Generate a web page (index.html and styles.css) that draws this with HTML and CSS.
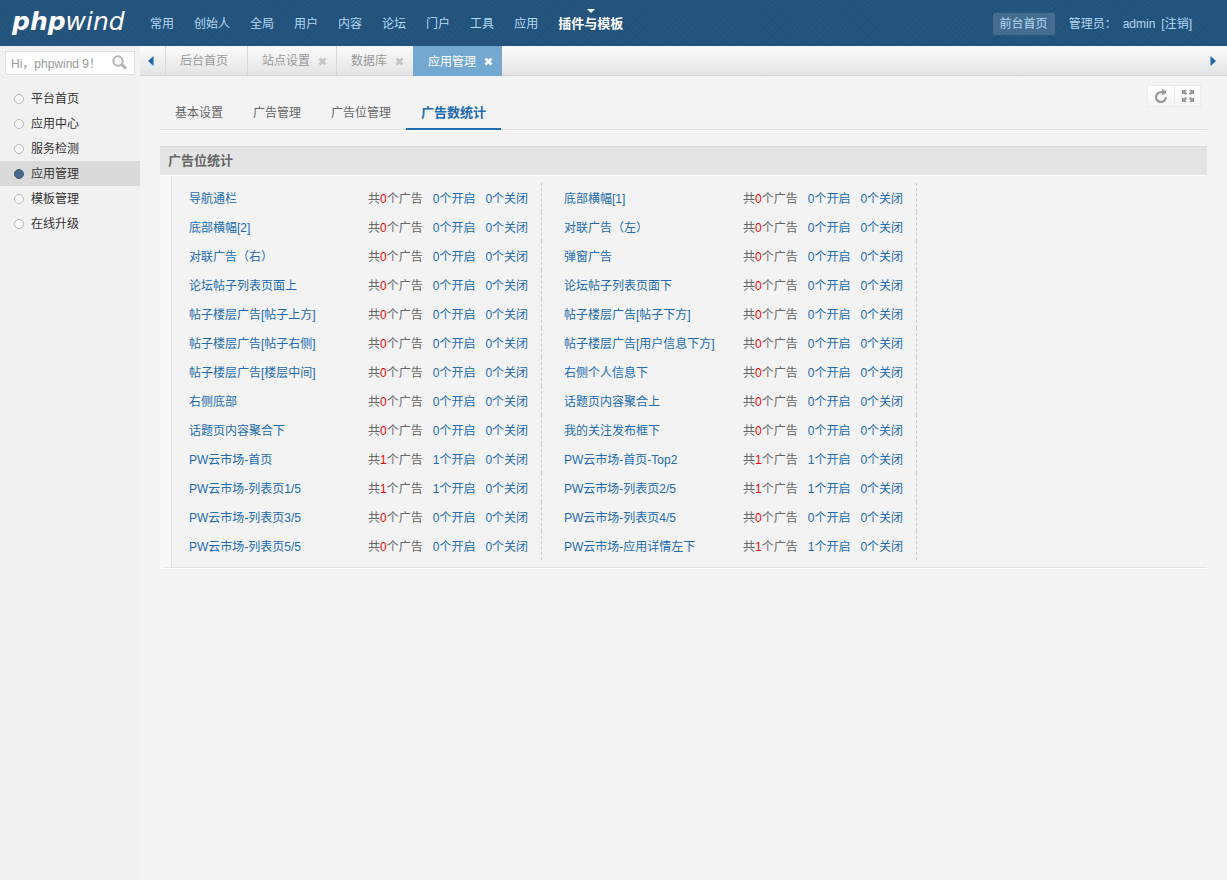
FILE: index.html
```html
<!DOCTYPE html>
<html lang="zh-CN">
<head>
<meta charset="utf-8">
<title>phpwind</title>
<link rel="stylesheet" href="styles.css">
</head>
<body>
<header class="header">
  <h1 class="logo"><strong>php</strong>wind</h1>
  <nav class="nav">
    <a href="#">常用</a><a href="#">创始人</a><a href="#">全局</a><a href="#">用户</a><a href="#">内容</a><a href="#">论坛</a><a href="#">门户</a><a href="#">工具</a><a href="#">应用</a><a href="#" class="current">插件与模板</a>
  </nav>
  <div class="user">
    <a href="#" class="home">前台首页</a>
    <span>管理员：</span>
    <span>admin</span>
    <a href="#">[注销]</a>
  </div>
</header>
<div class="body">
  <aside class="side">
    <form class="search">
      <input type="text" aria-label="搜索" placeholder="Hi，phpwind 9！">
      <button type="button" aria-label="搜索"><svg width="16" height="16" viewBox="0 0 16 16"><circle cx="6" cy="6" r="4.7" fill="none" stroke="#b4b4b4" stroke-width="2"/><path d="M9.5 9.500 14 13.700" stroke="#b4b4b4" stroke-width="3"/></svg></button>
    </form>
    <ul class="menu">
      <li><a href="#">平台首页</a></li>
      <li><a href="#">应用中心</a></li>
      <li><a href="#">服务检测</a></li>
      <li class="current"><a href="#">应用管理</a></li>
      <li><a href="#">模板管理</a></li>
      <li><a href="#">在线升级</a></li>
    </ul>
  </aside>
  <main class="main">
    <div class="tabs">
      <button type="button" class="arrow" aria-label="向左"><svg width="6" height="10" viewBox="0 0 6 10"><path d="M5.500 0v10L0 5z" fill="#1f66ae"/></svg></button>
      <div class="tab first"><a href="#">后台首页</a></div>
      <div class="tab"><a href="#">站点设置</a><button type="button" aria-label="关闭"><svg width="9" height="9" viewBox="0 0 9 9"><path d="M1.500 1.500l6 6M7.500 1.500l-6 6"/></svg></button></div>
      <div class="tab"><a href="#">数据库</a><button type="button" aria-label="关闭"><svg width="9" height="9" viewBox="0 0 9 9"><path d="M1.500 1.500l6 6M7.500 1.500l-6 6"/></svg></button></div>
      <div class="tab current"><a href="#">应用管理</a><button type="button" aria-label="关闭"><svg width="9" height="9" viewBox="0 0 9 9"><path d="M1.500 1.500l6 6M7.500 1.500l-6 6"/></svg></button></div>
      <button type="button" class="arrow next" aria-label="向右"><svg width="6" height="10" viewBox="0 0 6 10"><path d="M.5 0v10L6 5z" fill="#1f66ae"/></svg></button>
    </div>
    <div class="tools">
      <button type="button" aria-label="刷新"><svg width="14" height="14" viewBox="0 0 14 14"><path d="M9 3.200H7A4.900 4.900 0 1 0 11.900 8" fill="none" stroke="#999" stroke-width="2.200"/><path d="M8 0l1.500 0 0 1.500 2.500 0 0 2.700-4 2z" fill="#999"/></svg></button>
      <button type="button" aria-label="全屏"><svg width="12" height="12" viewBox="0 0 12 12" fill="#999"><path d="M0 0h5L3.500 1.500 5 3.500 3.500 5 1.500 3.500 0 5zM12 0v5l-1.500-1.500L8.500 5 7 3.500l1.500-2L7 0zM0 12V7l1.500 1.500L3.500 7 5 8.500l-1.500 2L5 12zM12 12H7l1.500-1.500L7 8.500 8.500 7l2 1.500L12 7z"/></svg></button>
    </div>
    <div class="content">
      <nav class="subnav">
        <a href="#">基本设置</a><a href="#">广告管理</a><a href="#">广告位管理</a><a href="#" class="current">广告数统计</a>
      </nav>
      <h2 class="title">广告位统计</h2>
      <div class="panel">
        <ul class="stats">
          <li><a href="#" class="name">导航通栏</a><span>共<em>0</em>个广告</span><a href="#">0个开启</a><a href="#">0个关闭</a></li>
          <li><a href="#" class="name">底部横幅[1]</a><span>共<em>0</em>个广告</span><a href="#">0个开启</a><a href="#">0个关闭</a></li>
          <li><a href="#" class="name">底部横幅[2]</a><span>共<em>0</em>个广告</span><a href="#">0个开启</a><a href="#">0个关闭</a></li>
          <li><a href="#" class="name">对联广告（左）</a><span>共<em>0</em>个广告</span><a href="#">0个开启</a><a href="#">0个关闭</a></li>
          <li><a href="#" class="name">对联广告（右）</a><span>共<em>0</em>个广告</span><a href="#">0个开启</a><a href="#">0个关闭</a></li>
          <li><a href="#" class="name">弹窗广告</a><span>共<em>0</em>个广告</span><a href="#">0个开启</a><a href="#">0个关闭</a></li>
          <li><a href="#" class="name">论坛帖子列表页面上</a><span>共<em>0</em>个广告</span><a href="#">0个开启</a><a href="#">0个关闭</a></li>
          <li><a href="#" class="name">论坛帖子列表页面下</a><span>共<em>0</em>个广告</span><a href="#">0个开启</a><a href="#">0个关闭</a></li>
          <li><a href="#" class="name">帖子楼层广告[帖子上方]</a><span>共<em>0</em>个广告</span><a href="#">0个开启</a><a href="#">0个关闭</a></li>
          <li><a href="#" class="name">帖子楼层广告[帖子下方]</a><span>共<em>0</em>个广告</span><a href="#">0个开启</a><a href="#">0个关闭</a></li>
          <li><a href="#" class="name">帖子楼层广告[帖子右侧]</a><span>共<em>0</em>个广告</span><a href="#">0个开启</a><a href="#">0个关闭</a></li>
          <li><a href="#" class="name">帖子楼层广告[用户信息下方]</a><span>共<em>0</em>个广告</span><a href="#">0个开启</a><a href="#">0个关闭</a></li>
          <li><a href="#" class="name">帖子楼层广告[楼层中间]</a><span>共<em>0</em>个广告</span><a href="#">0个开启</a><a href="#">0个关闭</a></li>
          <li><a href="#" class="name">右侧个人信息下</a><span>共<em>0</em>个广告</span><a href="#">0个开启</a><a href="#">0个关闭</a></li>
          <li><a href="#" class="name">右侧底部</a><span>共<em>0</em>个广告</span><a href="#">0个开启</a><a href="#">0个关闭</a></li>
          <li><a href="#" class="name">话题页内容聚合上</a><span>共<em>0</em>个广告</span><a href="#">0个开启</a><a href="#">0个关闭</a></li>
          <li><a href="#" class="name">话题页内容聚合下</a><span>共<em>0</em>个广告</span><a href="#">0个开启</a><a href="#">0个关闭</a></li>
          <li><a href="#" class="name">我的关注发布框下</a><span>共<em>0</em>个广告</span><a href="#">0个开启</a><a href="#">0个关闭</a></li>
          <li><a href="#" class="name">PW云市场-首页</a><span>共<em>1</em>个广告</span><a href="#">1个开启</a><a href="#">0个关闭</a></li>
          <li><a href="#" class="name">PW云市场-首页-Top2</a><span>共<em>1</em>个广告</span><a href="#">1个开启</a><a href="#">0个关闭</a></li>
          <li><a href="#" class="name">PW云市场-列表页1/5</a><span>共<em>1</em>个广告</span><a href="#">1个开启</a><a href="#">0个关闭</a></li>
          <li><a href="#" class="name">PW云市场-列表页2/5</a><span>共<em>1</em>个广告</span><a href="#">1个开启</a><a href="#">0个关闭</a></li>
          <li><a href="#" class="name">PW云市场-列表页3/5</a><span>共<em>0</em>个广告</span><a href="#">0个开启</a><a href="#">0个关闭</a></li>
          <li><a href="#" class="name">PW云市场-列表页4/5</a><span>共<em>0</em>个广告</span><a href="#">0个开启</a><a href="#">0个关闭</a></li>
          <li><a href="#" class="name">PW云市场-列表页5/5</a><span>共<em>0</em>个广告</span><a href="#">0个开启</a><a href="#">0个关闭</a></li>
          <li><a href="#" class="name">PW云市场-应用详情左下</a><span>共<em>1</em>个广告</span><a href="#">1个开启</a><a href="#">0个关闭</a></li>
        </ul>
      </div>
    </div>
  </main>
</div>
</body>
</html>
```
FILE: styles.css
```css
* { box-sizing: border-box; }
body {
  margin: 0;
  min-height: 100vh;
  display: flex;
  flex-direction: column;
  background: #f3f3f3;
  color: #666;
  font: 12px/18px "Liberation Sans", "Noto Sans CJK SC", sans-serif;
}
a { color: inherit; text-decoration: none; }
ul { margin: 0; padding: 0; list-style: none; }
button { padding: 0; border: 0; background: none; font: inherit; cursor: pointer; }
svg { display: block; }

.header {
  height: 46px;
  display: flex;
  align-items: center;
  padding: 1px 35px 0 12px;
  color: #b4d8f4;
  background:
    repeating-linear-gradient(45deg, rgba(0, 0, 30, .04) 0 1px, transparent 1px 4px),
    repeating-linear-gradient(-45deg, rgba(0, 0, 30, .04) 0 1px, transparent 1px 4px),
    #24557f;
}
.logo {
  margin: 0;
  width: 128px;
  padding-bottom: 3px;
  color: #fff;
  font: italic 400 25px/40px "DejaVu Sans", sans-serif;
}
.logo strong { font-weight: 700; }
.nav { display: flex; flex: 1; }
.nav a { position: relative; padding: 0 10px; line-height: 46px; white-space: nowrap; }
.nav .current { color: #fff; font-size: 13px; font-weight: 700; }
.nav .current::before {
  content: "";
  position: absolute;
  top: 8px;
  left: 50%;
  margin-left: -4px;
  border: 4px solid transparent;
  border-top-color: #fff;
  border-bottom: 0;
}
.user { display: flex; align-items: center; gap: 6px; white-space: nowrap; }
.home { margin-right: 8px; padding: 2px 7px; border-radius: 2px; background: #456d92; }

.body { flex: 1; display: flex; }
.side { width: 140px; background: #f1f1f1; }
.search {
  height: 24px;
  margin: 5px 5px 11px;
  display: flex;
  align-items: center;
  border: 1px solid #e0e0e0;
  background: #fff;
}
.search input {
  flex: 1;
  min-width: 0;
  height: 22px;
  padding: 2px 0 0 5px;
  border: 0;
  background: none;
  font: inherit;
}
.search input::placeholder { color: #999; }
.search button { margin-right: 6px; }
.menu a { display: flex; align-items: center; height: 25px; padding-left: 14px; color: #333; }
.menu a::before {
  content: "";
  width: 8px;
  height: 8px;
  margin-right: 7px;
  border: 1px solid #bbb;
  border-radius: 50%;
  background: #fafafa;
}
.menu .current { background: #dadada; }
.menu .current a::before { border-color: #3d5a75; background: #47698a; }

.main { flex: 1; min-width: 0; position: relative; }
.tabs {
  height: 30px;
  display: flex;
  border-bottom: 1px solid #d5d5d5;
  background: linear-gradient(#fbfbfb, #e4e4e4);
}
.arrow { width: 25px; display: flex; align-items: center; justify-content: center; padding-right: 4px; }
.next { margin-left: auto; }
.tab {
  height: 29px;
  display: flex;
  align-items: center;
  gap: 8px;
  padding: 1px 9px 0 14px;
  border-left: 1px solid #d9d9d9;
  color: #999;
  white-space: nowrap;
}
.tab path { stroke: #c4c4c4; stroke-width: 2.5; }
.tab.first { padding-right: 19px; }
.tab.current { height: 30px; border-color: #73a8d1; background: #73a8d1; color: #fff; }
.tab.current path { stroke: #fff; }

.tools { position: absolute; top: 39px; right: 26px; display: flex; border: 1px solid #ececec; }
.tools button {
  width: 26px;
  height: 20px;
  display: flex;
  align-items: center;
  justify-content: center;
  background: linear-gradient(#fff, #f4f4f4);
}
.tools button + button { border-left: 1px solid #ececec; }

.content { padding: 19px 20px 20px; }
.subnav {
  display: flex;
  margin-bottom: 16px;
  border-bottom: 1px solid #e1e1e1;
  box-shadow: 0 1px #fff;
}
.subnav a { height: 35px; margin-bottom: -1px; padding: 0 15px; line-height: 36px; white-space: nowrap; }
.subnav .current { border-bottom: 2px solid #226bb0; color: #226bb0; font-size: 13px; font-weight: 700; }
.title {
  margin: 0;
  padding: 5px 8px;
  border-top: 1px solid #dcdcdc;
  border-bottom: 1px solid #fff;
  background: #e4e4e4;
  font-size: 13px;
  line-height: 18px;
}
.panel {
  border-left: 11px solid #f8f8f8;
  border-bottom: 1px solid #e1e1e1;
  box-shadow: 0 1px #fff;
}
.stats {
  display: grid;
  grid-template-columns: repeat(auto-fill, 353px);
  column-gap: 22px;
  max-width: 760px;
  padding: 7px 0 7px 17px;
  border-left: 1px solid #e1e1e1;
}
.stats li {
  height: 29px;
  display: flex;
  align-items: center;
  gap: 10px;
  padding-top: 2px;
  border-right: 1px dashed #ccc;
  white-space: nowrap;
}
.stats a { color: #226bb0; }
.stats .name { width: 169px; }
.stats em { color: #f00; font-style: normal; }
```
